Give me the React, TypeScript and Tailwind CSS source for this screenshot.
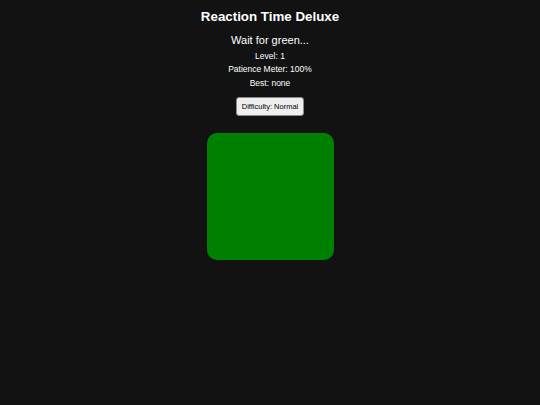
import React from "react";

export default function App() {
  return (
    <div
      className="w-[540px] h-[405px] bg-[#121212] text-white flex flex-col items-center"
      style={{ fontFamily: '"Liberation Sans", Arial, sans-serif' }}
    >
      <h1 className="mt-[9.3px] text-[13.33px] leading-[16px] font-bold">Reaction Time Deluxe</h1>
      <div className="mt-[8.6px] text-[11px] leading-[13px]">Wait for green...</div>
      <div className="mt-[3px] flex flex-col items-center text-[8.5px] leading-[13.5px]">
        <div>Level: 1</div>
        <div>Patience Meter: 100%</div>
        <div>Best: none</div>
      </div>
      <button className="mt-[6.3px] h-[19.3px] px-[5px] text-[7.5px] leading-none text-black bg-[#efefef] border border-[#8a8a8a] rounded-[3px]">
        Difficulty: Normal
      </button>
      <div className="mt-[16.7px] w-[127px] h-[127px] bg-[#008000] rounded-[10px]" />
    </div>
  );
}
